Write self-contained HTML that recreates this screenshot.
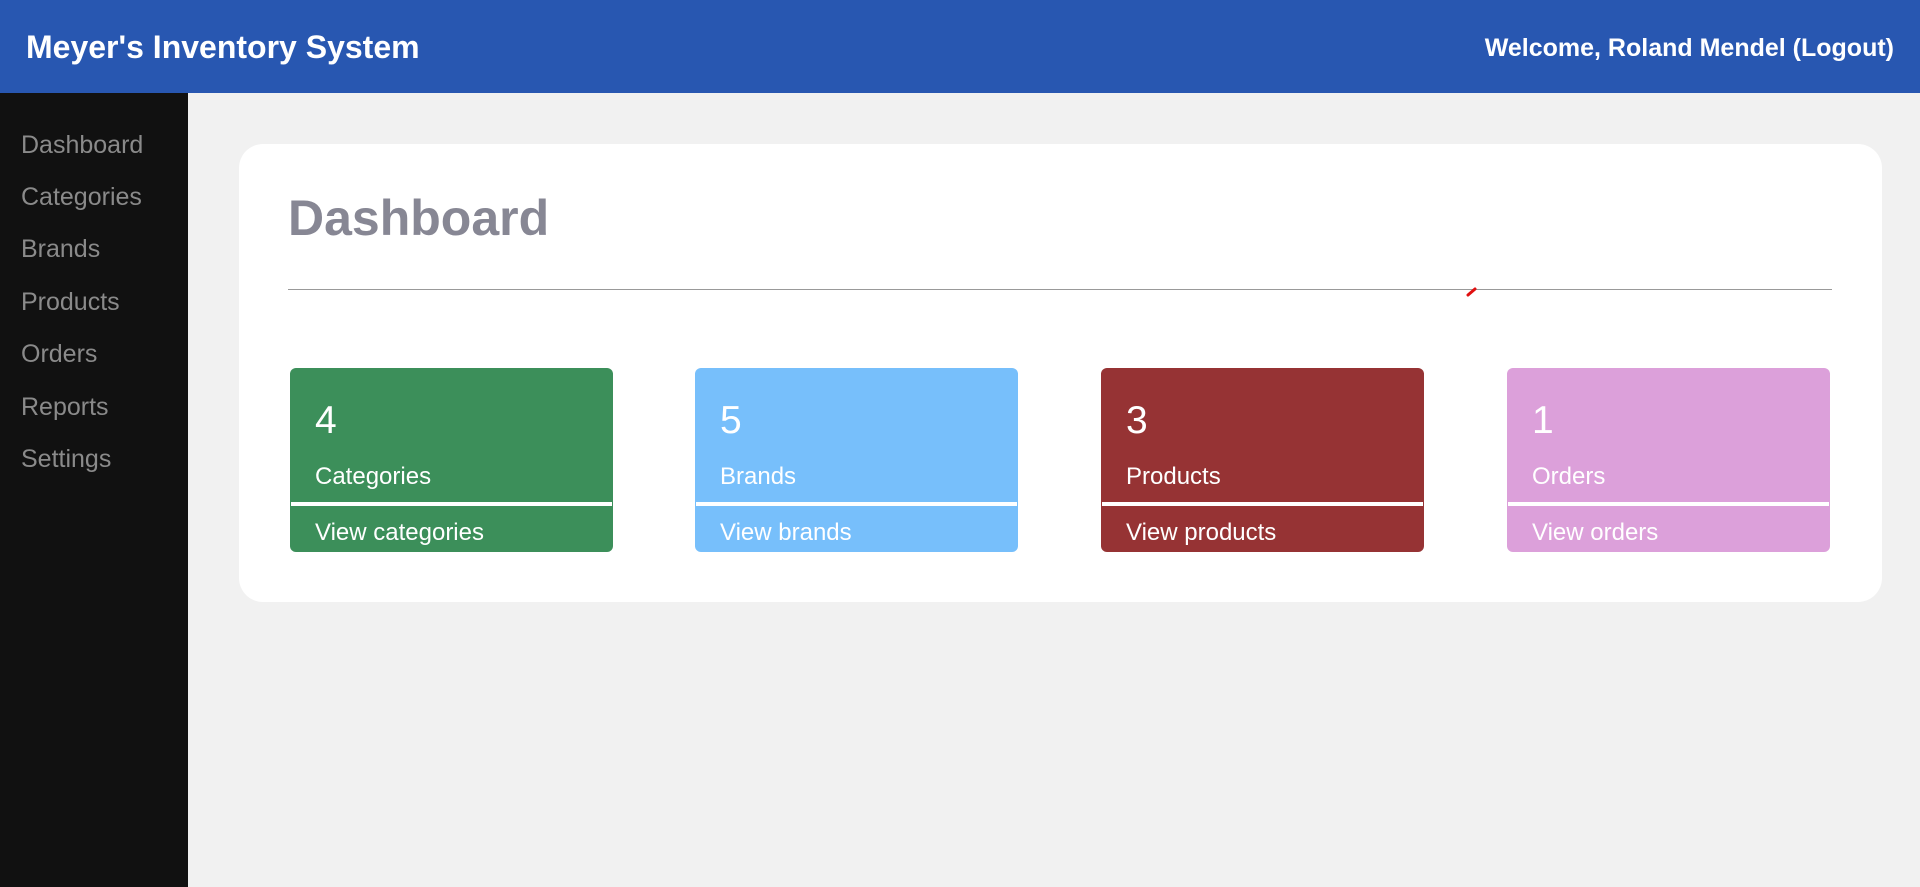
<!DOCTYPE html>
<html><head><meta charset="utf-8"><style>
*{margin:0;padding:0;box-sizing:border-box}
body{width:1920px;height:887px;background:#f1f1f1;font-family:"Liberation Sans",Arial,sans-serif;position:relative;overflow:hidden}
.hdr{position:absolute;left:0;top:0;width:1920px;height:93px;background:#2857b1;color:#fff;font-weight:bold}
.hdr .t{position:absolute;left:26px;top:29px;font-size:32px}
.hdr .w{position:absolute;right:26px;top:34px;font-size:25px}
.side{position:absolute;left:0;top:93px;width:188px;height:794px;background:#111}
.side div{position:absolute;left:21px;font-size:25px;color:#8a8a8a}
.card{position:absolute;left:239px;top:144px;width:1643px;height:458px;background:#fff;border-radius:24px}
h1{position:absolute;left:288px;top:189px;font-size:50px;color:#878794;font-weight:bold}
.hr{position:absolute;left:288px;top:289px;width:1544px;height:1px;background:#999}
.box{position:absolute;top:368px;width:323px;height:184px;border-radius:6px;color:#fff}
.box .n{position:absolute;left:25px;top:31px;font-size:39px}
.box .l{position:absolute;left:25px;top:95px;font-size:24px}
.box .ln{position:absolute;left:1px;right:1px;top:134px;height:4px;background:#fff}
.box .v{position:absolute;left:25px;top:151px;font-size:24px}
</style></head><body>
<div class="hdr"><div class="t">Meyer's Inventory System</div><div class="w">Welcome, Roland Mendel (Logout)</div></div>
<div class="side">
<div style="top:38px">Dashboard</div>
<div style="top:90px">Categories</div>
<div style="top:142px">Brands</div>
<div style="top:195px">Products</div>
<div style="top:247px">Orders</div>
<div style="top:300px">Reports</div>
<div style="top:352px">Settings</div>
</div>
<div class="card"></div>
<h1>Dashboard</h1>
<div class="hr"></div>
<svg style="position:absolute;left:1466px;top:287px" width="12" height="10"><path d="M2 8 L9 2" stroke="#e01010" stroke-width="3" stroke-linecap="round"/></svg>
<div class="box" style="left:290px;background:#3c8f5a"><div class="n">4</div><div class="l">Categories</div><div class="ln"></div><div class="v">View categories</div></div>
<div class="box" style="left:695px;background:#77bffb"><div class="n">5</div><div class="l">Brands</div><div class="ln"></div><div class="v">View brands</div></div>
<div class="box" style="left:1101px;background:#963334"><div class="n">3</div><div class="l">Products</div><div class="ln"></div><div class="v">View products</div></div>
<div class="box" style="left:1507px;background:#dca0da"><div class="n">1</div><div class="l">Orders</div><div class="ln"></div><div class="v">View orders</div></div>
</body></html>
